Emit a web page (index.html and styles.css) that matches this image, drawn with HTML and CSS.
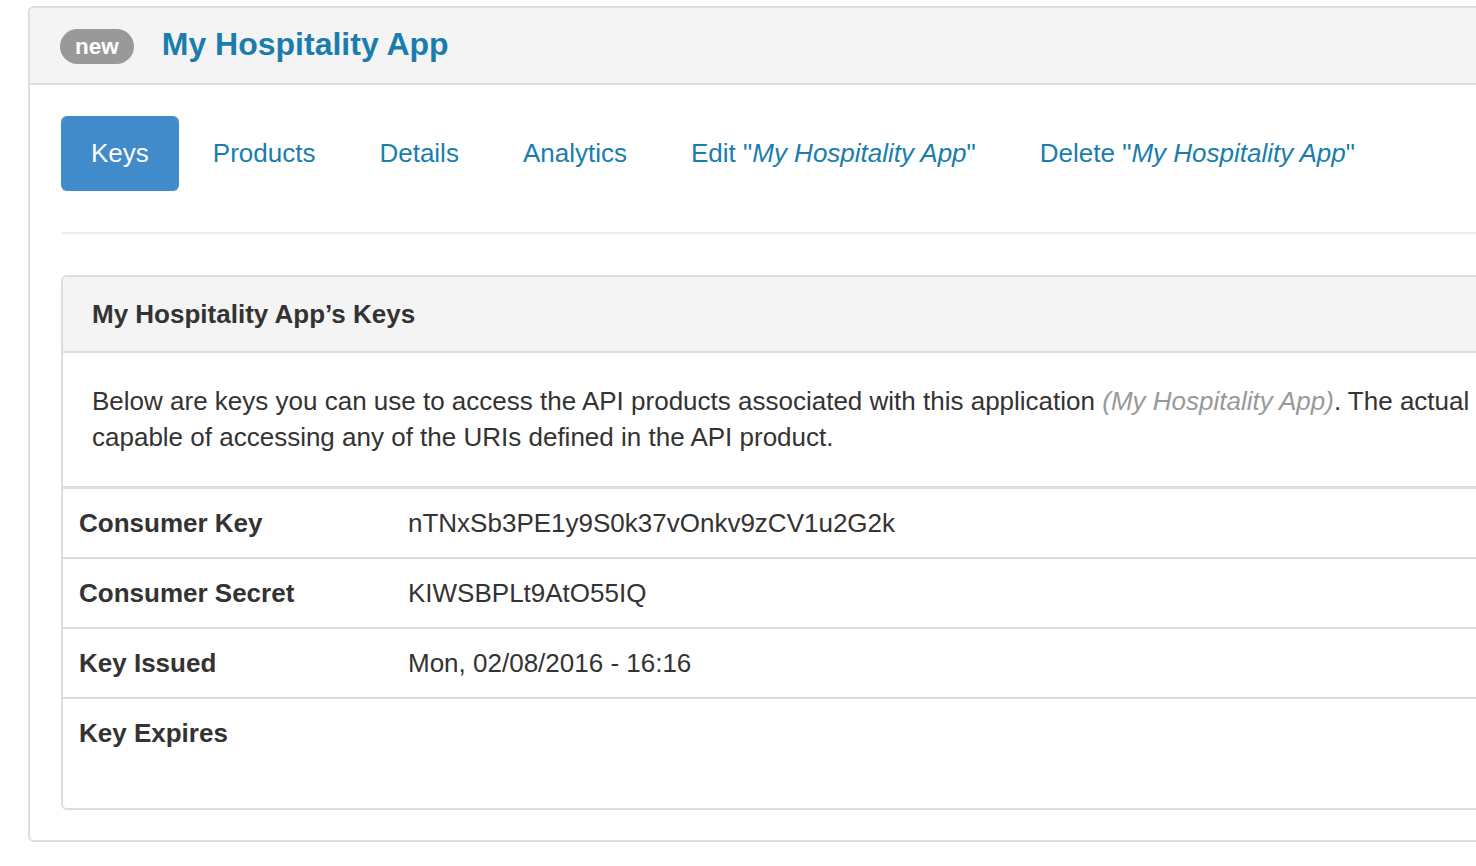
FILE: index.html
```html
<!DOCTYPE html>
<html>
<head>
<meta charset="utf-8">
<link rel="stylesheet" href="styles.css">
</head>
<body>
<div class="page">
  <div class="panel outer">
    <div class="panel-heading outer-heading">
      <span class="badge">new</span>
      <a class="app-title" href="#">My Hospitality App</a>
    </div>
    <div class="panel-body outer-body">
      <ul class="nav-pills">
        <li class="active"><a href="#">Keys</a></li>
        <li><a href="#">Products</a></li>
        <li><a href="#">Details</a></li>
        <li><a href="#">Analytics</a></li>
        <li><a href="#">Edit "<em>My Hospitality App</em>"</a></li>
        <li><a href="#">Delete "<em>My Hospitality App</em>"</a></li>
      </ul>
      <hr class="divider">
      <div class="panel inner">
        <div class="panel-heading inner-heading">
          <h3 class="panel-title">My Hospitality App’s Keys</h3>
        </div>
        <div class="panel-body inner-body">
          <p class="intro">Below are keys you can use to access the API products associated with this application <em class="muted">(My Hospitality App)</em>. The actual keys are capable of accessing any of the URIs defined in the API product.</p>
        </div>
        <table class="keys">
          <tbody>
            <tr><th>Consumer Key</th><td>nTNxSb3PE1y9S0k37vOnkv9zCV1u2G2k</td></tr>
            <tr><th>Consumer Secret</th><td>KIWSBPLt9AtO55IQ</td></tr>
            <tr><th>Key Issued</th><td>Mon, 02/08/2016 - 16:16</td></tr>
            <tr class="last"><th>Key Expires</th><td></td></tr>
          </tbody>
        </table>
      </div>
    </div>
  </div>
</div>
</body>
</html>
```
FILE: styles.css
```css
html, body {
  margin: 0;
  padding: 0;
  background: #fff;
  overflow: hidden;
}
body {
  font-family: "Liberation Sans", Arial, Helvetica, sans-serif;
  font-size: 26px;
  line-height: 36px;
  color: #333;
}
.page {
  padding: 6px 0 0 28px;
  width: 1700px;
}
.panel {
  border: 2px solid #ddd;
  border-radius: 6px;
  background: #fff;
  box-sizing: border-box;
}
.outer {
  width: 1654px;
}
.panel-heading {
  background: #f4f4f4;
  border-bottom: 2px solid #ddd;
  border-radius: 6px 6px 0 0;
}
.outer-heading {
  display: flex;
  align-items: center;
  height: 77px;
  box-sizing: border-box;
  padding: 0 0 0 30px;
}
.badge {
  display: inline-block;
  background: #999;
  color: #fff;
  font-weight: bold;
  font-size: 22.5px;
  line-height: 35px;
  padding: 0 15px;
  border-radius: 18px;
  margin-top: 2px;
}
.app-title {
  color: #1a7dad;
  text-decoration: none;
  font-weight: bold;
  font-size: 32px;
  margin-left: 28px;
  margin-bottom: 4px;
}
.outer-body {
  padding: 31px 31px 30px 31px;
}
.nav-pills {
  list-style: none;
  margin: 0;
  padding: 0;
  display: flex;
}
.nav-pills li {
  margin-left: 4px;
}
.nav-pills li:first-child {
  margin-left: 0;
}
.nav-pills a {
  display: block;
  padding: 19px 30px 20px;
  line-height: 36px;
  color: #1a7dad;
  text-decoration: none;
  border-radius: 6px;
}
.nav-pills .active a {
  background: #428bca;
  color: #fff;
}
.divider {
  border: 0;
  border-top: 2px solid #eee;
  margin: 41px 0 41px 0;
}
.inner {
  width: 100%;
}
.inner-heading {
  height: 76px;
  box-sizing: border-box;
  padding: 0 29px;
  display: flex;
  align-items: center;
}
.panel-title {
  margin: 0;
  font-size: 26px;
  font-weight: bold;
  color: #333;
}
.inner-body {
  padding: 30px 31px 31px 29px;
}
.intro {
  margin: 0;
}
.muted {
  color: #999;
}
.keys {
  width: 100%;
  border-collapse: collapse;
  border-top: 3px solid #ddd;
  margin-bottom: 41px;
}
.keys th, .keys td {
  text-align: left;
  padding: 16px 16px;
  line-height: 36px;
  vertical-align: top;
}
.keys th {
  width: 297px;
  font-weight: bold;
}
.keys tr + tr th, .keys tr + tr td {
  border-top: 2px solid #ddd;
}
```
